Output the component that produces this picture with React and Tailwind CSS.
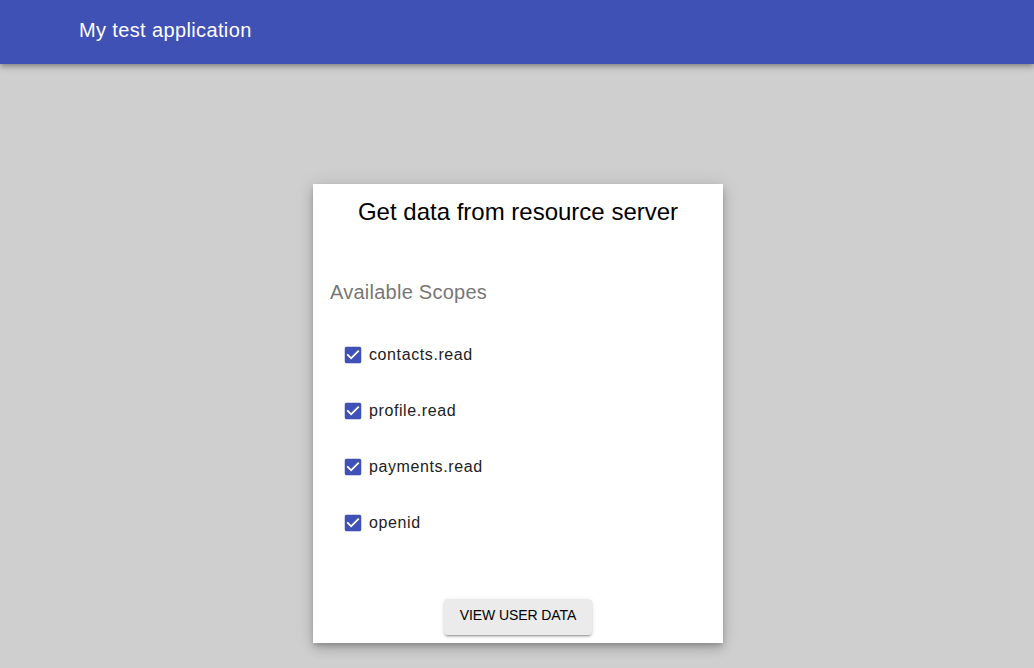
const scopes = ['contacts.read', 'profile.read', 'payments.read', 'openid'];

const CheckIcon = () => (
  <svg viewBox="0 0 24 24" className="w-[22px] h-[22px] fill-[#3f51b5]">
    <path d="M19 3H5c-1.11 0-2 .9-2 2v14c0 1.1.89 2 2 2h14c1.11 0 2-.9 2-2V5c0-1.1-.89-2-2-2zm-9 14l-5-5 1.41-1.41L10 14.17l7.59-7.59L19 8l-9 9z" />
  </svg>
);

const App = () => {
  return (
    <div className="min-h-screen bg-[#cfcfcf] font-['Liberation_Sans',Arial,sans-serif]">
      <header className="h-16 bg-[#3f51b5] flex items-center px-[79px] shadow-[0_2px_4px_-1px_rgba(0,0,0,0.2),0_4px_5px_0_rgba(0,0,0,0.14),0_1px_10px_0_rgba(0,0,0,0.12)]">
        <h1 className="text-white text-[20px] leading-7 tracking-[0.37px] -mt-[5px]">My test application</h1>
      </header>

      <div className="flex justify-center pt-[120px] pl-[2px]">
        <div className="w-[410px] h-[459px] bg-white flex flex-col px-4 pt-[12px] pb-2 shadow-[0_3px_5px_-1px_rgba(0,0,0,0.2),0_6px_10px_0_rgba(0,0,0,0.14),0_1px_18px_0_rgba(0,0,0,0.12)]">
          <h2 className="text-center text-black text-[24px] leading-8">Get data from resource server</h2>

          <h3 className="mt-[50px] ml-px text-[#777777] text-[20px] leading-7 tracking-[0.25px]">Available Scopes</h3>

          <div className="mt-[37px] flex flex-col gap-8 pl-[13px]">
            {scopes.map((scope) => (
              <label key={scope} className="flex items-center gap-[5px] h-6">
                <CheckIcon />
                <span className="text-[16px] leading-6 text-[#212121] tracking-[0.6px]">{scope}</span>
              </label>
            ))}
          </div>

          <div className="mt-auto flex justify-center">
            <button className="w-[148px] h-9 pb-[5px] bg-[#ebebeb] rounded text-[14px] leading-5 text-black uppercase tracking-[-0.1px] shadow-[0_3px_1px_-2px_rgba(0,0,0,0.2),0_2px_2px_0_rgba(0,0,0,0.14),0_1px_5px_0_rgba(0,0,0,0.12)]">
              View user data
            </button>
          </div>
        </div>
      </div>
    </div>
  );
};

export default App;
